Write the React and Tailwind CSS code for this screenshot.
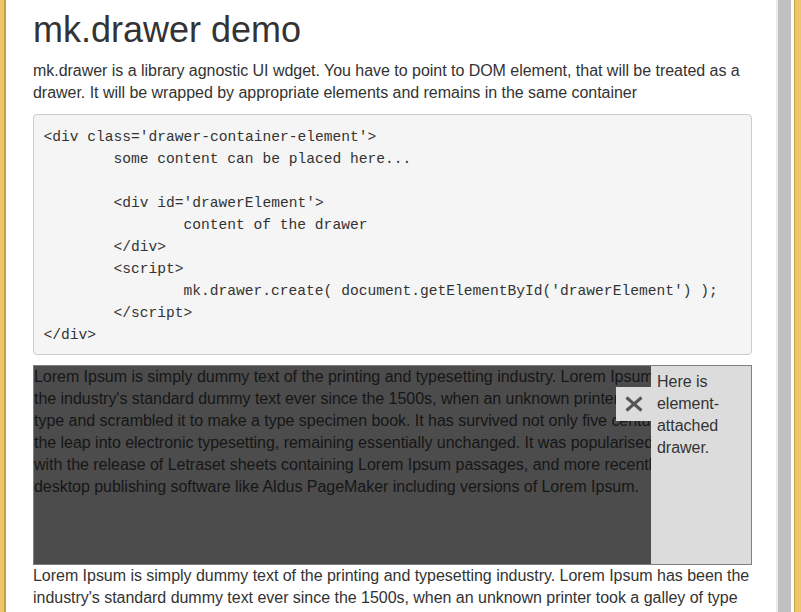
const code = `<div class='drawer-container-element'>
\tsome content can be placed here...

\t<div id='drawerElement'>
\t\tcontent of the drawer
\t</div>
\t<script>
\t\tmk.drawer.create( document.getElementById('drawerElement') );
\t</script>
</div>`

const lorem =
  "Lorem Ipsum is simply dummy text of the printing and typesetting industry. Lorem Ipsum has been the industry's standard dummy text ever since the 1500s, when an unknown printer took a galley of type and scrambled it to make a type specimen book. It has survived not only five centuries, but also the leap into electronic typesetting, remaining essentially unchanged. It was popularised in the 1960s with the release of Letraset sheets containing Lorem Ipsum passages, and more recently with desktop publishing software like Aldus PageMaker including versions of Lorem Ipsum."

// wrapping of the text behind the overlay, as the drawer squeezes it
const coveredLines = [
  'Lorem Ipsum is simply dummy text of the printing and typesetting industry. Lorem Ipsum has been',
  "the industry's standard dummy text ever since the 1500s, when an unknown printer took a galley of",
  'type and scrambled it to make a type specimen book. It has survived not only five centuries, but also',
  'the leap into electronic typesetting, remaining essentially unchanged. It was popularised in the 1960s',
  'with the release of Letraset sheets containing Lorem Ipsum passages, and more recently with',
  'desktop publishing software like Aldus PageMaker including versions of Lorem Ipsum.',
]

function CloseIcon() {
  return (
    <svg width="18" height="16" viewBox="0 0 18 16">
      <path d="M1.5 1.5 L16.5 14.5 M16.5 1.5 L1.5 14.5" stroke="#555" strokeWidth="3" fill="none" />
    </svg>
  )
}

function Drawer() {
  return (
    <div className="relative w-[100px] h-full bg-[#dcdcdc] text-[#333] pt-[5px] px-[6px]">
      <button className="absolute left-[-35px] top-[21px] w-[35px] h-[34px] bg-[#dcdcdc] flex items-center justify-center">
        <CloseIcon />
      </button>
      Here is element-attached drawer.
    </div>
  )
}

export default function App() {
  return (
    <div className="flex h-[612px] overflow-hidden bg-white font-['Liberation_Sans',Arial,sans-serif] text-[16px] leading-[22px] text-[#333] tracking-[-0.03px]">
      <div className="w-[4px] shrink-0 bg-[#ecc667]"></div>
      <div className="w-[2px] shrink-0 bg-[#c9a046]"></div>
      <main className="flex-1 min-w-0 pl-[27px] pr-[24px] pt-[10px]">
        <h1 className="text-[36px] leading-[40px] mb-[10px] tracking-normal">mk.drawer demo</h1>
        <p className="mb-[10px]">
          mk.drawer is a library agnostic UI wdget. You have to point to DOM element, that will be treated as a drawer. It will be wrapped by appropriate elements and remains in the same container
        </p>
        <pre className="mb-[10px] bg-[#f5f5f5] border border-[#ccc] rounded-[4px] px-[9.5px] pt-[11px] pb-[8px] font-['Liberation_Mono',monospace] text-[14.6px] leading-[22px] tracking-normal text-[#333] [tab-size:70px] overflow-hidden">
          {code}
        </pre>
        <div className="relative h-[200px] border border-[#808080] bg-[#4c4c4c] flex overflow-hidden">
          <div className="flex-1 min-w-0 overflow-hidden text-[#161616]">
            {coveredLines.map((line, i) => (
              <div key={i} className="whitespace-nowrap">{line}</div>
            ))}
          </div>
          <Drawer />
        </div>
        <p>{lorem}</p>
      </main>
      <div className="w-[2px] shrink-0 bg-[#ececec]"></div>
      <div className="w-[13px] shrink-0 bg-[#c1c1c1]"></div>
      <div className="w-[3px] shrink-0 bg-white"></div>
      <div className="w-[1px] shrink-0 bg-[#c9a046]"></div>
      <div className="w-[6px] shrink-0 bg-[#ecc667]"></div>
    </div>
  )
}
